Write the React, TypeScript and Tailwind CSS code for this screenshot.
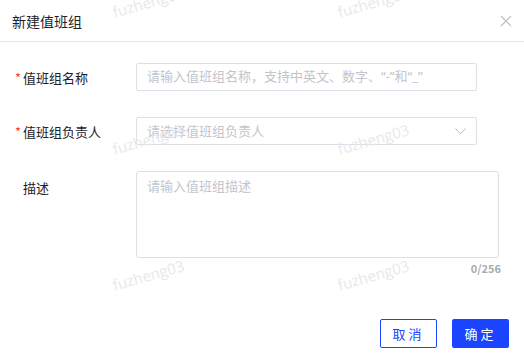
import React from "react";

const font = { fontFamily: '"Noto Sans CJK SC", "Noto Sans", sans-serif' };
const phFont = { fontFamily: '"Noto Sans", "Noto Sans CJK SC", sans-serif' };

function Watermark({ x, y }: { x: number; y: number }) {
  return (
    <div
      className="pointer-events-none absolute text-[15px] text-[#e8e8ec] -rotate-[16deg] origin-left select-none"
      style={{ left: x, top: y, fontFamily: '"Open Sans", "Noto Sans", sans-serif' }}
    >
      fuzheng03
    </div>
  );
}

export default function App() {
  return (
    <div className="relative w-[524px] h-[362px] bg-white overflow-hidden text-[#1d2129]" style={font}>
      <div className="h-[42px] flex items-center justify-between pl-3 pr-[12px] border-b border-[#e5e6eb]">
        <span className="text-[14px] leading-none">新建值班组</span>
        <svg width="12" height="12" viewBox="0 0 12 12">
          <path d="M1 1L11 11M11 1L1 11" stroke="#b8bcc4" strokeWidth="1.1" fill="none" />
        </svg>
      </div>

      <div className="pt-[21px] pl-[15px] pr-[25px]">
        <div className="flex items-center h-[28px]">
          <div className="w-[121px] flex items-center text-[13px] pt-[2px]">
            <span className="text-[#f53f3f] w-[8px] text-[13px]">*</span>
            <span>值班组名称</span>
          </div>
          <div className="w-[341px] h-[28px] border border-[#dcdfe6] rounded-[2px] flex items-center px-[10px] text-[13px] text-[#c2c5cc]" style={phFont}>
            请输入值班组名称，支持中英文、数字、“-”和“_”
          </div>
        </div>

        <div className="flex items-center h-[28px] mt-[26px]">
          <div className="w-[121px] flex items-center text-[13px] pt-[2px]">
            <span className="text-[#f53f3f] w-[8px] text-[13px]">*</span>
            <span>值班组负责人</span>
          </div>
          <div className="w-[341px] h-[28px] border border-[#dcdfe6] rounded-[2px] flex items-center justify-between pl-[10px] pr-[10px] text-[13px] text-[#c2c5cc]">
            <span>请选择值班组负责人</span>
            <svg width="11" height="7" viewBox="0 0 11 7">
              <path d="M0.5 0.5L5.5 5.8L10.5 0.5" stroke="#b8bcc4" strokeWidth="1" fill="none" />
            </svg>
          </div>
        </div>

        <div className="flex items-start mt-[26px]">
          <div className="w-[121px] pl-[8px] text-[13px] pt-[7px]">描述</div>
          <div className="flex flex-col items-end">
            <div className="w-[363px] h-[87px] border border-[#dcdfe6] rounded-[3px] px-[10px] pt-[4px] text-[13px] text-[#c2c5cc]">
              请输入值班组描述
            </div>
            <div className="text-[11px] font-semibold text-[#a8abb2] leading-none mt-[5px] mr-[-2px]">0/256</div>
          </div>
        </div>
      </div>

      <div className="absolute right-[15px] top-[319px] flex gap-[15px]">
        <button className="w-[57px] h-[29px] border border-[#1a44ff] rounded-[2px] text-[#1a44ff] text-[13px] tracking-[3px] bg-white" style={font}>
          取消
        </button>
        <button className="w-[57px] h-[29px] bg-[#1a44ff] rounded-[2px] text-white text-[13px] tracking-[3px]" style={font}>
          确定
        </button>
      </div>

      <Watermark x={113} y={1} />
      <Watermark x={338} y={1} />
      <Watermark x={113} y={138} />
      <Watermark x={338} y={138} />
      <Watermark x={113} y={274} />
      <Watermark x={338} y={274} />
    </div>
  );
}
